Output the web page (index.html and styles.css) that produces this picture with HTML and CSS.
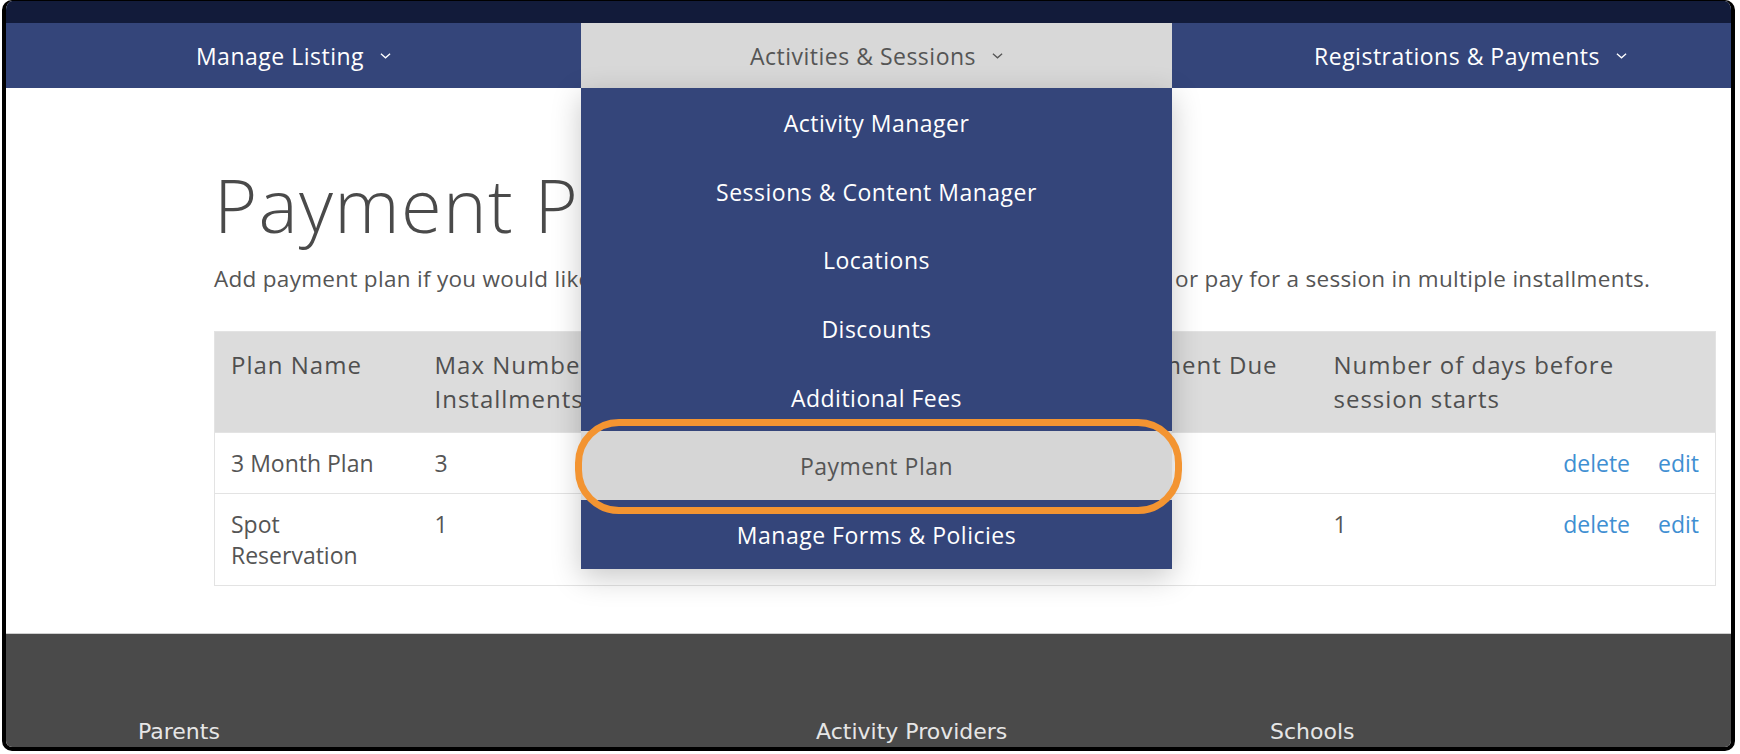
FILE: index.html
```html
<!DOCTYPE html>
<html>
<head>
<meta charset="UTF-8">
<meta name="viewport" content="width=device-width, initial-scale=1.0">
<title>Payment Plan</title>
<link rel="stylesheet" href="styles.css">
</head>
<body>
<div class="frame">
	<div class="topband"></div>
	<div class="nav">
		<div class="nav_item">Manage Listing <svg class="chev" viewBox="0 0 12 8"><polyline points="1,1.5 6,6 11,1.5"/></svg></div>
		<div class="nav_item active">Activities &amp; Sessions <svg class="chev" viewBox="0 0 12 8"><polyline points="1,1.5 6,6 11,1.5"/></svg>
			<ul class="dropdown">
				<li>Activity Manager</li>
				<li>Sessions &amp; Content Manager</li>
				<li>Locations</li>
				<li>Discounts</li>
				<li>Additional Fees</li>
				<li class="current">Payment Plan<span class="ring"></span></li>
				<li>Manage Forms &amp; Policies</li>
			</ul>
		</div>
		<div class="nav_item right">Registrations &amp; Payments <svg class="chev" viewBox="0 0 12 8"><polyline points="1,1.5 6,6 11,1.5"/></svg></div>
	</div>
	<div class="main">
		<h1>Payment Plan</h1>
		<p class="intro">Add payment plan if you would like to give parents the option to hold a spot with deposit or pay for a session in multiple installments.</p>
		<table class="plans">
			<colgroup>
				<col class="c1"><col class="c2"><col class="c3"><col class="c4"><col class="c5"><col>
			</colgroup>
			<thead>
				<tr>
					<th>Plan Name</th>
					<th>Max Number of Installments</th>
					<th>Deposit Amount</th>
					<th>First Payment Due</th>
					<th class="days" colspan="2">Number of days before session starts</th>
				</tr>
			</thead>
			<tbody>
				<tr>
					<td>3 Month Plan</td>
					<td>3</td>
					<td>$50.00</td>
					<td>Monthly</td>
					<td></td>
					<td class="acts"><a href="#">delete</a><a href="#">edit</a></td>
				</tr>
				<tr>
					<td>Spot Reservation</td>
					<td>1</td>
					<td>$100.00</td>
					<td>Now</td>
					<td>1</td>
					<td class="acts"><a href="#">delete</a><a href="#">edit</a></td>
				</tr>
			</tbody>
		</table>
	</div>
	<div class="footer">
		<div class="f_col">Parents</div>
		<div class="f_col">Activity Providers</div>
		<div class="f_col">Schools</div>
	</div>
</div>
</body>
</html>
```

FILE: styles.css
```css
*{margin:0;padding:0;box-sizing:border-box;}
html,body{background:#fff;}
body{font-family:"Open Sans","Liberation Sans",sans-serif;color:#4a4a4a;}
li{list-style-type:none;}
a{text-decoration:none;color:#3f8fd2;}
.frame{margin:0 5px 0 2px;height:751px;border:4px solid #000;border-top-width:1px;border-radius:10px;overflow:hidden;}
.topband{height:22px;background:#121b3a;}
.nav{display:grid;grid-template-columns:575px 591px 1fr;height:65px;background:#34457a;position:relative;z-index:5;}
.nav_item{position:relative;display:flex;align-items:center;justify-content:center;color:#fff;font-size:23px;letter-spacing:.5px;}
.nav_item.active{background:#d8d8d8;color:#555;}
.nav_item.right{padding-left:38px;}
.chev{width:11px;height:8px;margin-left:16px;fill:none;stroke:currentColor;stroke-width:1.4;}
.dropdown{position:absolute;top:100%;left:0;width:100%;background:#34457a;box-shadow:0 8px 28px rgba(0,0,0,.22);}
.dropdown li{position:relative;height:68.7px;line-height:70px;text-align:center;color:#fff;font-size:23px;letter-spacing:.5px;}
.dropdown li.current{background:#d6d6d6;color:#555;}
.ring{position:absolute;top:-12px;left:-6px;right:-10px;bottom:-14px;border:7px solid #f39431;border-radius:44px;}
.main{height:545px;padding:80px 15px 0 208px;}
h1{font-size:74px;line-height:74px;font-weight:300;color:#4a4a4a;letter-spacing:1.3px;}
.intro{margin-top:23px;font-size:22.5px;line-height:28px;color:#555;letter-spacing:.3px;white-space:nowrap;}
.plans{margin-top:38px;width:100%;table-layout:fixed;border-collapse:collapse;border:1px solid #e3e3e3;font-size:23px;color:#555;}
.plans th{background:#dcdcdc;text-align:left;vertical-align:top;font-weight:500;font-size:24px;line-height:34px;padding:16px 16px;color:#4f4f4f;letter-spacing:1px;}
.plans th.days{padding-right:100px;}
.plans td{vertical-align:top;line-height:31px;padding:15px 16px 14px;border-top:1px solid #e3e3e3;}
.c1{width:204px;}
.c2{width:270px;}
.c3{width:351px;}
.c4{width:278px;}
.c5{width:196px;}
.acts{text-align:right;white-space:nowrap;}
.acts a{margin-left:28px;}
.footer{height:120px;background:#4a4a4a;border-top:1px solid #cfcfcf;display:grid;grid-template-columns:678px 454px 1fr;padding:85px 0 0 132px;color:#e6e6e6;font-size:22px;font-family:"DejaVu Sans","Liberation Sans",sans-serif;}
```
